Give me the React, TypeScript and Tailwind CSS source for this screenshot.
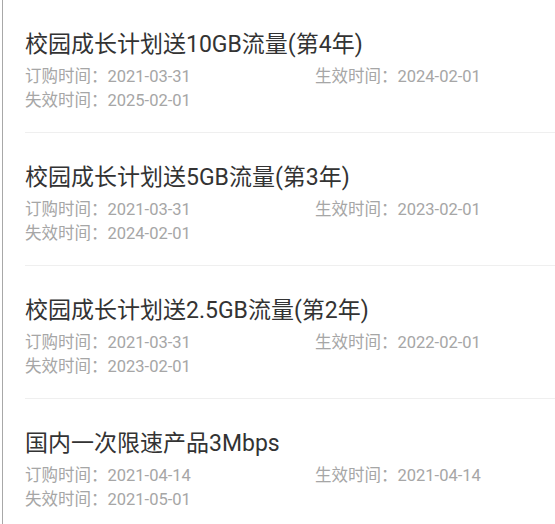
const orders = [
  { name: '校园成长计划送10GB流量(第4年)', bought: '2021-03-31', start: '2024-02-01', end: '2025-02-01' },
  { name: '校园成长计划送5GB流量(第3年)', bought: '2021-03-31', start: '2023-02-01', end: '2024-02-01' },
  { name: '校园成长计划送2.5GB流量(第2年)', bought: '2021-03-31', start: '2022-02-01', end: '2023-02-01' },
  { name: '国内一次限速产品3Mbps', bought: '2021-04-14', start: '2021-04-14', end: '2021-05-01' },
];

export default function App() {
  return (
    <div className="h-[524px] w-[555px] overflow-hidden bg-white pl-[2px] font-['Roboto','Noto_Sans_CJK_SC',sans-serif]">
      <div className="h-full border-l border-[#a8a8a8]">
        {orders.map((o) => (
          <div key={o.name} className="ml-[22px] border-b border-[#efefef] pt-[29px] pb-[19px]">
            <div className="text-[23px] leading-[31px] text-[#333333]">{o.name}</div>
            <div className="mt-[5px] grid grid-cols-[290px_1fr] text-[16.5px] leading-[24px] text-[#a6a6a6]">
              <span>订购时间：{o.bought}</span>
              <span>生效时间：{o.start}</span>
              <span>失效时间：{o.end}</span>
            </div>
          </div>
        ))}
      </div>
    </div>
  );
}
